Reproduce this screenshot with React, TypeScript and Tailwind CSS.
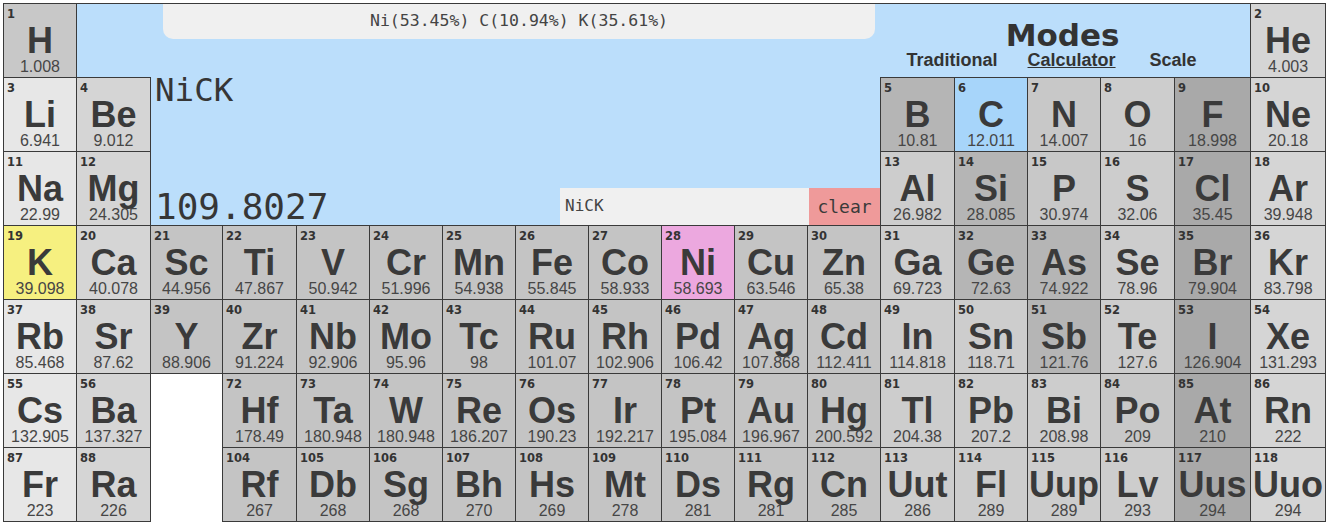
import type { ReactNode } from 'react';

type Cat = 'alk' | 'ae' | 'tm' | 'pt' | 'md' | 'nm' | 'ch' | 'hal' | 'ng' | 'k' | 'c' | 'ni';

const shade: Record<Cat, string> = {
  alk: 'bg-[#e7e7e7]',
  ae: 'bg-[#d5d5d5]',
  tm: 'bg-[#c4c4c4]',
  pt: 'bg-[#cdcdcd]',
  md: 'bg-[#b5b5b5]',
  nm: 'bg-[#c8c8c8]',
  ch: 'bg-[#cdcdcd]',
  hal: 'bg-[#a9a9a9]',
  ng: 'bg-[#d5d5d5]',
  k: 'bg-[#f6f080]',
  c: 'bg-[#a7d5fa]',
  ni: 'bg-[#eca8df]',
};

type El = [number, string, string, Cat];

const row1a: El[] = [[1, 'H', '1.008', 'nm']];
const row1b: El[] = [[2, 'He', '4.003', 'ng']];
const row2a: El[] = [[3, 'Li', '6.941', 'alk'], [4, 'Be', '9.012', 'ae']];
const row2b: El[] = [
  [5, 'B', '10.81', 'md'], [6, 'C', '12.011', 'c'], [7, 'N', '14.007', 'nm'],
  [8, 'O', '16', 'ch'], [9, 'F', '18.998', 'hal'], [10, 'Ne', '20.18', 'ng'],
];
const row3a: El[] = [[11, 'Na', '22.99', 'alk'], [12, 'Mg', '24.305', 'ae']];
const row3b: El[] = [
  [13, 'Al', '26.982', 'pt'], [14, 'Si', '28.085', 'md'], [15, 'P', '30.974', 'nm'],
  [16, 'S', '32.06', 'ch'], [17, 'Cl', '35.45', 'hal'], [18, 'Ar', '39.948', 'ng'],
];
const row4: El[] = [
  [19, 'K', '39.098', 'k'], [20, 'Ca', '40.078', 'ae'], [21, 'Sc', '44.956', 'tm'],
  [22, 'Ti', '47.867', 'tm'], [23, 'V', '50.942', 'tm'], [24, 'Cr', '51.996', 'tm'],
  [25, 'Mn', '54.938', 'tm'], [26, 'Fe', '55.845', 'tm'], [27, 'Co', '58.933', 'tm'],
  [28, 'Ni', '58.693', 'ni'], [29, 'Cu', '63.546', 'tm'], [30, 'Zn', '65.38', 'tm'],
  [31, 'Ga', '69.723', 'pt'], [32, 'Ge', '72.63', 'md'], [33, 'As', '74.922', 'md'],
  [34, 'Se', '78.96', 'ch'], [35, 'Br', '79.904', 'hal'], [36, 'Kr', '83.798', 'ng'],
];
const row5: El[] = [
  [37, 'Rb', '85.468', 'alk'], [38, 'Sr', '87.62', 'ae'], [39, 'Y', '88.906', 'tm'],
  [40, 'Zr', '91.224', 'tm'], [41, 'Nb', '92.906', 'tm'], [42, 'Mo', '95.96', 'tm'],
  [43, 'Tc', '98', 'tm'], [44, 'Ru', '101.07', 'tm'], [45, 'Rh', '102.906', 'tm'],
  [46, 'Pd', '106.42', 'tm'], [47, 'Ag', '107.868', 'tm'], [48, 'Cd', '112.411', 'tm'],
  [49, 'In', '114.818', 'pt'], [50, 'Sn', '118.71', 'pt'], [51, 'Sb', '121.76', 'md'],
  [52, 'Te', '127.6', 'ch'], [53, 'I', '126.904', 'hal'], [54, 'Xe', '131.293', 'ng'],
];
const row6a: El[] = [[55, 'Cs', '132.905', 'alk'], [56, 'Ba', '137.327', 'ae']];
const row6b: El[] = [
  [72, 'Hf', '178.49', 'tm'], [73, 'Ta', '180.948', 'tm'], [74, 'W', '180.948', 'tm'],
  [75, 'Re', '186.207', 'tm'], [76, 'Os', '190.23', 'tm'], [77, 'Ir', '192.217', 'tm'],
  [78, 'Pt', '195.084', 'tm'], [79, 'Au', '196.967', 'tm'], [80, 'Hg', '200.592', 'tm'],
  [81, 'Tl', '204.38', 'pt'], [82, 'Pb', '207.2', 'pt'], [83, 'Bi', '208.98', 'pt'],
  [84, 'Po', '209', 'nm'], [85, 'At', '210', 'hal'], [86, 'Rn', '222', 'ng'],
];
const row7a: El[] = [[87, 'Fr', '223', 'alk'], [88, 'Ra', '226', 'ae']];
const row7b: El[] = [
  [104, 'Rf', '267', 'tm'], [105, 'Db', '268', 'tm'], [106, 'Sg', '268', 'tm'],
  [107, 'Bh', '270', 'tm'], [108, 'Hs', '269', 'tm'], [109, 'Mt', '278', 'tm'],
  [110, 'Ds', '281', 'tm'], [111, 'Rg', '281', 'tm'], [112, 'Cn', '285', 'tm'],
  [113, 'Uut', '286', 'pt'], [114, 'Fl', '289', 'pt'], [115, 'Uup', '289', 'pt'],
  [116, 'Lv', '293', 'pt'], [117, 'Uus', '294', 'hal'], [118, 'Uuo', '294', 'ng'],
];

// column widths read off the screenshot (last two columns are a bit wider)
const colWidths = [
  'w-[73px]', 'w-[74px]', 'w-[72px]', 'w-[74px]', 'w-[73px]', 'w-[73px]',
  'w-[73px]', 'w-[73px]', 'w-[73px]', 'w-[73px]', 'w-[73px]', 'w-[73px]',
  'w-[74px]', 'w-[73px]', 'w-[73px]', 'w-[74px]', 'w-[76px]', 'w-[75px]',
];

function Cell({ el }: { el: El }) {
  const [n, sym, mass, cat] = el;
  return (
    <td className={`border border-[#3a3a3a] p-0 align-top ${shade[cat]}`}>
      <div className="flex h-[73px] flex-col overflow-hidden">
        <span className="pl-[3px] pt-[4px] font-['DejaVu_Sans',sans-serif] text-[11.5px] font-bold leading-[12px] text-[#333]">
          {n}
        </span>
        <span className="mt-[3px] whitespace-nowrap text-center text-[36px] font-bold leading-[36px] text-[#3a3a3a]">
          {sym}
        </span>
        <span className="text-center text-[16px] leading-[16px] text-[#464646]">{mass}</span>
      </div>
    </td>
  );
}

const cells = (list: El[]) => list.map(el => <Cell key={el[0]} el={el} />);

function Row({ children }: { children: ReactNode }) {
  return <tr className="h-[74px]">{children}</tr>;
}

export default function App() {
  return (
    <div className="min-h-[524px] bg-white pl-[3px] pt-[3px] font-['Liberation_Sans',Arial,sans-serif]">
      <table className="w-[1322px] table-fixed border-collapse">
        <colgroup>
          {colWidths.map((w, i) => (
            <col key={i} className={w} />
          ))}
        </colgroup>
        <tbody>
          <Row>
            {cells(row1a)}
            <td colSpan={16} className="border-t border-[#3a3a3a] bg-[#bbdefb] p-0 align-top">
              <div className="flex h-[73px]">
                <div className="w-[86px] shrink-0" />
                <div className="flex h-[35px] w-[712px] shrink-0 items-center justify-center rounded-b-[10px] bg-[#f0f0f0] font-['DejaVu_Sans_Mono',monospace] text-[16.5px] text-[#444]">
                  Ni(53.45%) C(10.94%) K(35.61%)
                </div>
                <div className="flex flex-1 flex-col items-center pt-[16px] text-[#333]">
                  <div className="font-['DejaVu_Sans',sans-serif] text-[31px] font-bold leading-[31px]">Modes</div>
                  <div className="flex pr-[22px] text-[18px] font-bold leading-[18px]">
                    <span>Traditional</span>
                    <span className="ml-[30px] underline">Calculator</span>
                    <span className="ml-[34px]">Scale</span>
                  </div>
                </div>
              </div>
            </td>
            {cells(row1b)}
          </Row>
          <Row>
            {cells(row2a)}
            <td colSpan={10} rowSpan={2} className="bg-[#bbdefb] p-0 align-top">
              <div className="flex h-[147px] flex-col justify-between pl-[4px] font-['DejaVu_Sans_Mono',monospace] text-[#363636]">
                <div className="text-[32.5px] leading-[24px]">NiCK</div>
                <div className="flex items-end justify-between">
                  <div className="text-[36px] leading-[36px]">109.8027</div>
                  <div className="flex">
                    <div className="flex h-[37px] w-[249px] items-center bg-[#f0f0f0] pl-[5px] text-[16px] text-[#444]">
                      NiCK
                    </div>
                    <div className="flex h-[37px] w-[71px] items-center justify-center bg-[#ef9a9a] text-[18px] text-[#3a3a3a]">
                      clear
                    </div>
                  </div>
                </div>
              </div>
            </td>
            {cells(row2b)}
          </Row>
          <Row>
            {cells(row3a)}
            {cells(row3b)}
          </Row>
          <Row>{cells(row4)}</Row>
          <Row>{cells(row5)}</Row>
          <Row>
            {cells(row6a)}
            <td rowSpan={2} className="bg-white p-0" />
            {cells(row6b)}
          </Row>
          <Row>
            {cells(row7a)}
            {cells(row7b)}
          </Row>
        </tbody>
      </table>
    </div>
  );
}
